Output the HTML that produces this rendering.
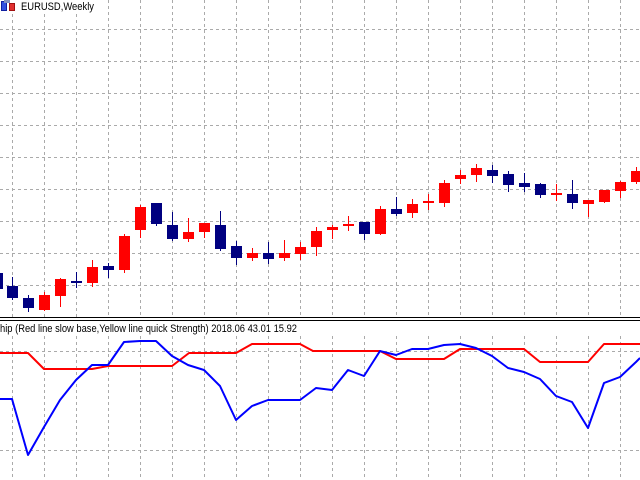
<!DOCTYPE html>
<html><head><meta charset="utf-8"><style>
html,body{margin:0;padding:0;background:#fff;width:640px;height:480px;overflow:hidden}
svg{display:block}
</style></head><body>
<svg width="640" height="480" viewBox="0 0 640 480" xmlns="http://www.w3.org/2000/svg" shape-rendering="crispEdges">
<rect width="640" height="480" fill="#fff"/>
<g stroke="#aaaaaa" stroke-width="1" stroke-dasharray="3,3">
<path d="M0 29.5H640M0 61.5H640M0 93.5H640M0 125.5H640M0 157.5H640M0 189.5H640M0 221.5H640M0 253.5H640M0 285.5H640M0 351.5H640M0 450.5H640"/>
<path d="M12.5 14V317M44.5 14V317M76.5 14V317M108.5 0V317M140.5 0V317M172.5 0V317M204.5 0V317M236.5 0V317M268.5 0V317M300.5 0V317M332.5 0V317M364.5 0V317M396.5 0V317M428.5 0V317M460.5 0V317M492.5 0V317M524.5 0V317M556.5 0V317M588.5 0V317M620.5 0V317"/>
<path d="M12.5 336V480M44.5 336V480M76.5 336V480M108.5 336V480M140.5 336V480M172.5 336V480M204.5 336V480M236.5 336V480M268.5 336V480M300.5 336V480M332.5 336V480M364.5 336V480M396.5 336V480M428.5 336V480M460.5 336V480M492.5 336V480M524.5 336V480M556.5 336V480M588.5 336V480M620.5 336V480"/>
</g>
<rect x="0" y="317" width="640" height="1" fill="#000"/>
<rect x="0" y="320" width="640" height="1" fill="#000"/>
<g fill="#000080">
<rect x="0" y="273" width="3" height="16"/>
<rect x="12" y="277" width="1" height="23"/><rect x="7" y="286" width="11" height="12"/>
<rect x="28" y="295" width="1" height="17"/><rect x="23" y="298" width="11" height="10"/>
<rect x="76" y="272" width="1" height="16"/><rect x="71" y="281" width="11" height="2"/>
<rect x="108" y="263" width="1" height="15"/><rect x="103" y="266" width="11" height="4"/>
<rect x="156" y="203" width="1" height="23"/><rect x="151" y="203" width="11" height="21"/>
<rect x="172" y="212" width="1" height="29"/><rect x="167" y="225" width="11" height="14"/>
<rect x="220" y="211" width="1" height="40"/><rect x="215" y="225" width="11" height="24"/>
<rect x="236" y="241" width="1" height="24"/><rect x="231" y="246" width="11" height="12"/>
<rect x="268" y="242" width="1" height="22"/><rect x="263" y="253" width="11" height="6"/>
<rect x="364" y="222" width="1" height="18"/><rect x="359" y="222" width="11" height="12"/>
<rect x="396" y="197" width="1" height="19"/><rect x="391" y="209" width="11" height="5"/>
<rect x="492" y="165" width="1" height="18"/><rect x="487" y="170" width="11" height="6"/>
<rect x="508" y="171" width="1" height="21"/><rect x="503" y="174" width="11" height="11"/>
<rect x="524" y="173" width="1" height="19"/><rect x="519" y="183" width="11" height="4"/>
<rect x="540" y="183" width="1" height="15"/><rect x="535" y="184" width="11" height="11"/>
<rect x="572" y="180" width="1" height="29"/><rect x="567" y="194" width="11" height="9"/>
</g>
<g fill="#ff0000">
<rect x="44" y="292" width="1" height="19"/><rect x="39" y="295" width="11" height="15"/>
<rect x="60" y="278" width="1" height="29"/><rect x="55" y="279" width="11" height="17"/>
<rect x="92" y="260" width="1" height="27"/><rect x="87" y="267" width="11" height="16"/>
<rect x="124" y="234" width="1" height="39"/><rect x="119" y="236" width="11" height="34"/>
<rect x="140" y="205" width="1" height="33"/><rect x="135" y="207" width="11" height="23"/>
<rect x="188" y="218" width="1" height="24"/><rect x="183" y="232" width="11" height="7"/>
<rect x="204" y="223" width="1" height="15"/><rect x="199" y="223" width="11" height="9"/>
<rect x="252" y="248" width="1" height="13"/><rect x="247" y="253" width="11" height="5"/>
<rect x="284" y="240" width="1" height="21"/><rect x="279" y="253" width="11" height="5"/>
<rect x="300" y="242" width="1" height="18"/><rect x="295" y="247" width="11" height="7"/>
<rect x="316" y="227" width="1" height="29"/><rect x="311" y="231" width="11" height="16"/>
<rect x="332" y="225" width="1" height="14"/><rect x="327" y="227" width="11" height="3"/>
<rect x="348" y="216" width="1" height="15"/><rect x="343" y="224" width="11" height="2"/>
<rect x="380" y="206" width="1" height="29"/><rect x="375" y="209" width="11" height="25"/>
<rect x="412" y="199" width="1" height="19"/><rect x="407" y="204" width="11" height="9"/>
<rect x="428" y="194" width="1" height="16"/><rect x="423" y="201" width="11" height="2"/>
<rect x="444" y="180" width="1" height="27"/><rect x="439" y="183" width="11" height="20"/>
<rect x="460" y="170" width="1" height="14"/><rect x="455" y="175" width="11" height="4"/>
<rect x="476" y="164" width="1" height="18"/><rect x="471" y="168" width="11" height="7"/>
<rect x="556" y="184" width="1" height="17"/><rect x="551" y="193" width="11" height="2"/>
<rect x="588" y="200" width="1" height="17"/><rect x="583" y="200" width="11" height="4"/>
<rect x="604" y="190" width="1" height="13"/><rect x="599" y="190" width="11" height="12"/>
<rect x="620" y="181" width="1" height="17"/><rect x="615" y="182" width="11" height="9"/>
<rect x="636" y="167" width="1" height="17"/><rect x="631" y="171" width="9" height="11"/>
</g>
<g fill="none" stroke-width="2" shape-rendering="auto" stroke-linejoin="round">
<polyline stroke="#ff0000" points="0,353 28,353 44,369 92,369 108,366 172,366 189,353 236,353 252,344 300,344 313,351 380,351 396,359 444,359 460,349 524,349 540,362 588,362 604,344 640,344"/>
<polyline stroke="#0000ff" points="0,399 12,399 28,455 44,427 60,400 76,380 92,365 108,365 124,342 140,341 156,341 172,356 188,365 204,370 220,386 236,420 252,406 268,400 300,400 316,388 332,390 348,370 364,376 380,351 396,355 412,349 428,349 444,345 460,344 476,348 492,356 508,368 524,372 540,379 556,396 572,402 588,428 604,383 620,377 636,362 640,358"/>
</g>
<rect x="1.5" y="1.5" width="5" height="9" fill="#3050e0" stroke="#1020a0"/>
<rect x="9.5" y="3.5" width="5" height="7" fill="#e03030" stroke="#a01010"/>
<rect x="4" y="0" width="6" height="3" fill="#8090c0"/>
<text x="21" y="10" font-family="Liberation Sans, sans-serif" font-size="11" fill="#000" textLength="73" lengthAdjust="spacingAndGlyphs">EURUSD,Weekly</text>
<text x="0" y="332" font-family="Liberation Sans, sans-serif" font-size="11" fill="#000" textLength="297" lengthAdjust="spacingAndGlyphs">hip (Red line slow base,Yellow line quick Strength) 2018.06 43.01 15.92</text>
</svg>
</body></html>
